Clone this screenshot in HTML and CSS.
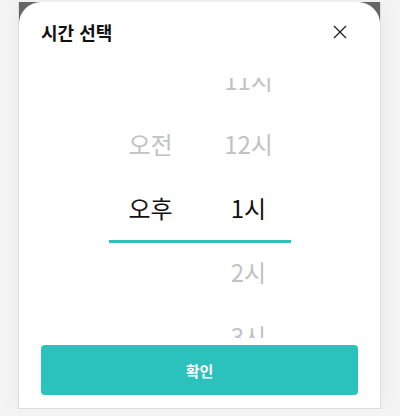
FILE: index.html
```html
<!DOCTYPE html>
<html lang="ko">
<head>
  <meta charset="UTF-8">
  <meta name="viewport" content="width=device-width, initial-scale=1.0">
  <title>시간 선택</title>
  <link rel="stylesheet" href="styles.css">
</head>
<body>
  <div class="frame">
    <div class="sheet">
      <div class="header">
        <h2>시간 선택</h2>
        <button class="close" aria-label="닫기">
          <svg width="14" height="14" viewBox="0 0 14 14">
            <path d="M1 1 L13 13 M13 1 L1 13" stroke="#222" stroke-width="1.3" fill="none"/>
          </svg>
        </button>
      </div>
      <div class="picker">
        <div class="selection"></div>
        <ul class="column">
          <li></li>
          <li>오전</li>
          <li class="active">오후</li>
          <li></li>
          <li></li>
        </ul>
        <ul class="column">
          <li>11시</li>
          <li>12시</li>
          <li class="active">1시</li>
          <li>2시</li>
          <li>3시</li>
        </ul>
      </div>
      <button class="confirm">확인</button>
    </div>
  </div>
</body>
</html>
```

FILE: styles.css
```css
body {
  margin: 0;
  background: #f4f4f4;
  font-family: 'Noto Sans CJK KR', 'Noto Sans', sans-serif;
}
.frame {
  width: 361px;
  margin: 0 0 0 18px;
  background: #666;
  border: 1px solid #ddd;
  border-top: none;
  box-shadow: 0 0 18px rgba(0,0,0,0.05);
}
.sheet {
  margin-top: 2px;
  height: 406px;
  background: #fff;
  border-radius: 22px 22px 0 0;
  display: flex;
  flex-direction: column;
}
.header {
  display: flex;
  align-items: center;
  justify-content: space-between;
  padding: 18px 33px 0 22px;
  height: 24px;
}
.header h2 {
  margin: 0;
  font-size: 18px;
  font-weight: 700;
  color: #111;
  line-height: 24px;
}
.close {
  border: none;
  background: none;
  padding: 0;
  width: 14px;
  height: 14px;
  cursor: pointer;
}
.picker {
  position: relative;
  width: 182px;
  height: 260px;
  margin: 34px auto 0;
  display: flex;
  justify-content: space-between;
  overflow: hidden;
}
.selection {
  position: absolute;
  left: 0;
  right: 0;
  top: 162px;
  height: 3px;
  background: #2bc0bb;
}
.column {
  list-style: none;
  margin: -30px 0 0;
  padding: 0;
  width: 84px;
}
.column li {
  height: 64px;
  line-height: 64px;
  text-align: center;
  font-size: 24px;
  color: #c2c2c2;
}
.column li.active {
  color: #111;
}
.confirm {
  margin: 7px 22px 0;
  height: 50px;
  border: none;
  border-radius: 4px;
  background: #2bc1bc;
  color: #fff;
  font-family: inherit;
  font-size: 15px;
  font-weight: 700;
  cursor: pointer;
}
```
